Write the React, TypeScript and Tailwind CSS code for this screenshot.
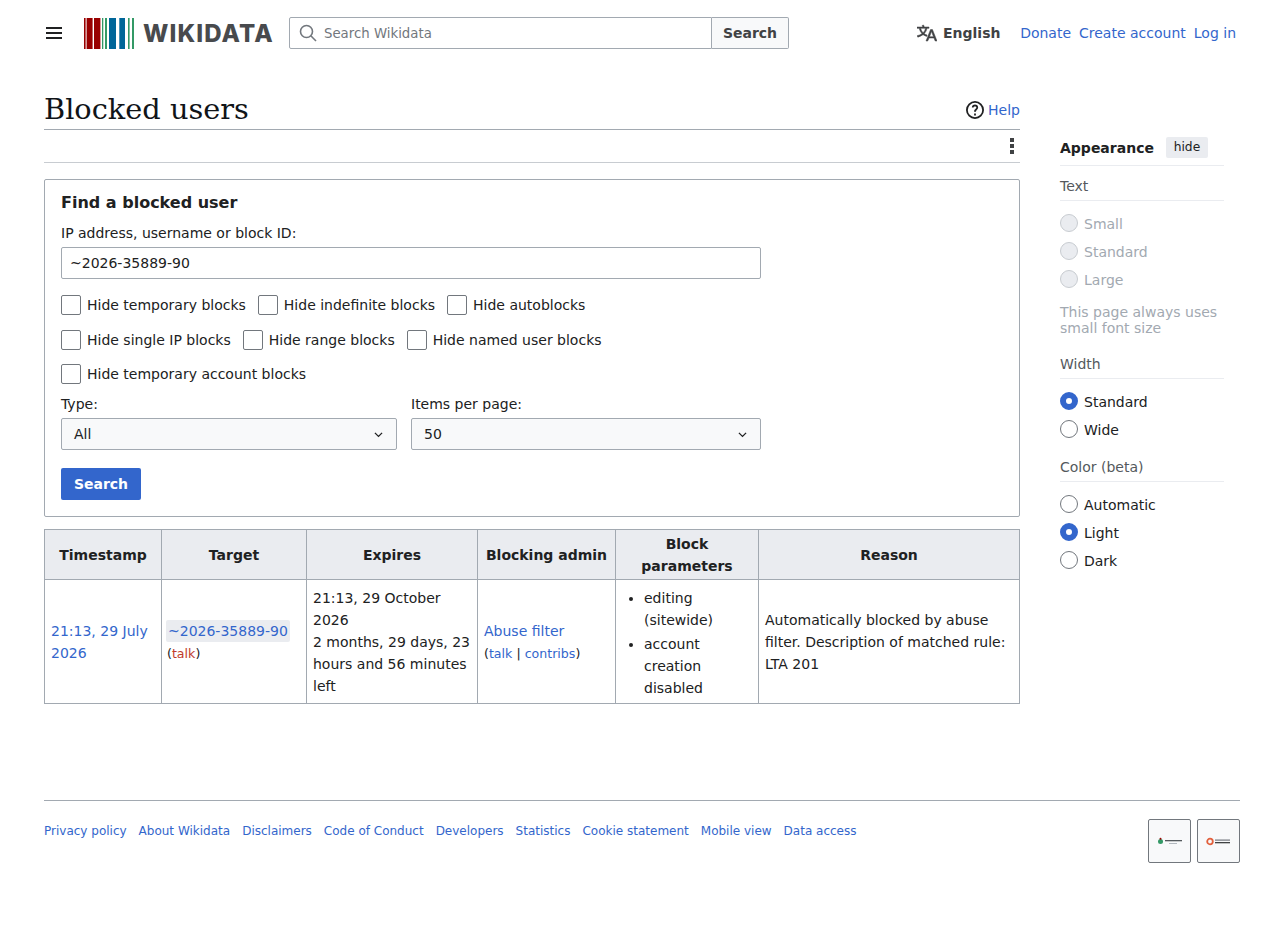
import React from "react";

const SANS = "font-['DejaVu_Sans',sans-serif]";

function Check({ label, className = "" }: { label: string; className?: string }) {
  return (
    <label className={`flex items-center ${className}`}>
      <span className="w-5 h-5 border border-[#72777d] rounded-[2px] bg-white mr-[6px] shrink-0" />
      <span>{label}</span>
    </label>
  );
}

function Radio({ label, state }: { label: string; state: "on" | "off" | "disabled" }) {
  const box =
    state === "on"
      ? "border-[6px] border-[#3366cc] bg-white"
      : state === "off"
      ? "border border-[#72777d] bg-white"
      : "border border-[#c8ccd1] bg-[#eaecf0]";
  return (
    <div className={`flex items-center h-7 ${state === "disabled" ? "text-[#a2a9b1]" : "text-[#202122]"}`}>
      <span className={`w-[18px] h-[18px] rounded-full mr-[6px] mb-[2px] shrink-0 ${box}`} />
      <span>{label}</span>
    </div>
  );
}

function Chevron() {
  return (
    <svg width="11" height="11" viewBox="0 0 20 20" fill="none" stroke="#202122" strokeWidth="2.4">
      <path d="M3.5 7 10 13.5 16.5 7" />
    </svg>
  );
}

function Select({ value, className }: { value: string; className: string }) {
  return (
    <div className={`h-8 border border-[#a2a9b1] rounded-[2px] bg-[#f8f9fa] flex items-center justify-between pl-3 pr-[12px] ${className}`}>
      <span>{value}</span>
      <Chevron />
    </div>
  );
}

function Logo() {
  const bars: [number, number, string][] = [
    [0, 1.6, "#990000"],
    [2.6, 6, "#990000"],
    [10, 6.4, "#990000"],
    [18, 1.3, "#339966"],
    [21, 2, "#339966"],
    [25, 7, "#006699"],
    [35.3, 5.7, "#006699"],
    [44, 1.6, "#339966"],
    [48, 2, "#339966"],
  ];
  return (
    <svg width="50" height="31" viewBox="0 0 50 31" className="shrink-0">
      {bars.map(([x, w, c], i) => (
        <rect key={i} x={x} y="0" width={w} height="31" fill={c} />
      ))}
    </svg>
  );
}

const th = "border border-[#a2a9b1] bg-[#eaecf0] font-bold text-center px-[7px] pt-[3px] pb-[2px] leading-[22px]";
const td = "border border-[#a2a9b1] px-[6px] py-[5px] align-middle leading-[22px]";
const link = "text-[#3366cc]";

export default function App() {
  return (
    <div className={`${SANS} text-[14px] leading-[22px] text-[#202122] bg-white min-h-[951px] w-[1284px]`}>
      {/* header */}
      <header className="h-[66px] pl-[44px] pr-[48px] flex items-center">
        <svg width="20" height="20" viewBox="0 0 20 20" fill="#202122" className="mr-[20px]">
          <path d="M2 4h16v2H2zM2 9h16v2H2zM2 14h16v2H2z" />
        </svg>
        <div className="flex items-center w-[190px] mr-[15px]">
          <Logo />
          <span className="ml-[9px] font-['Inter',sans-serif] font-extrabold text-[24px] leading-[31px] tracking-[1.1px] text-[#484a4d]">WIKIDATA</span>
        </div>
        <div className="w-[500px] h-8 flex">
          <div className="flex-1 h-8 border border-[#a2a9b1] rounded-l-[2px] flex items-center pl-[9px]">
            <svg width="18" height="18" viewBox="0 0 18 18" fill="none" stroke="#72777d" strokeWidth="1.6" className="mr-[7px]">
              <circle cx="7.500" cy="7.500" r="6" />
              <path d="m11.800 11.800 5.200 5.200" />
            </svg>
            <span className="text-[#72777d] text-[13.3px] pt-[1px]">Search Wikidata</span>
          </div>
          <div className="w-[77px] h-8 border border-l-0 border-[#a2a9b1] rounded-r-[2px] bg-[#f8f9fa] flex items-center justify-center font-bold text-[#404244]">
            Search
          </div>
        </div>
        <div className="flex items-center ml-[128px] font-bold text-[#404244]">
          <svg width="20" height="20" viewBox="0 0 20 20" fill="#404244" stroke="#404244" strokeWidth="0.5" className="mr-[6px]">
            <path d="M20 18h-1.44a.6.6 0 0 1-.4-.12.8.8 0 0 1-.23-.31L17 15h-5l-1 2.54a.8.8 0 0 1-.22.3.6.6 0 0 1-.4.14H9l4.55-11.47h1.89zm-3.53-4.31L14.89 9.5a12 12 0 0 1-.39-1.24q-.09.37-.19.69l-.19.56-1.58 4.19zm-6.3-1.58a13.4 13.4 0 0 1-2.91-1.41 11.5 11.5 0 0 0 2.81-5.37H12V4H7.31a4 4 0 0 0-.2-.56C6.87 2.79 6.6 2 6.6 2l-1.47.5s.4.89.6 1.5H0v1.33h2.15A11.2 11.2 0 0 0 5 10.7a17.2 17.2 0 0 1-5 2.1q.56.82.87 1.38a23.3 23.3 0 0 0 5.22-2.51 15.6 15.6 0 0 0 3.56 1.77zM3.63 5.33h4.91a8.1 8.1 0 0 1-2.45 4.45 9.1 9.1 0 0 1-2.46-4.45" />
          </svg>
          English
        </div>
        <div className={`ml-auto flex gap-2 ${link}`}>
          <span>Donate</span>
          <span>Create account</span>
          <span>Log in</span>
        </div>
      </header>

      {/* body */}
      <div className="flex pl-[44px]">
        <main className="w-[976px] shrink-0">
          <div className="h-[64px] border-b border-[#a2a9b1] flex items-end justify-between pb-[2px]">
            <h1 className="font-['DejaVu_Serif',serif] text-[28.8px] leading-[36px] text-[#101418]">Blocked users</h1>
            <div className="flex items-center mb-[6px]">
              <svg width="18" height="18" viewBox="0 0 20 20" fill="#202122" className="mr-[4px]">
                <path d="M10 0a10 10 0 1 0 0 20 10 10 0 0 0 0-20m0 18a8 8 0 1 1 0-16 8 8 0 0 1 0 16" />
                <path d="M9 14h2v2H9zM10 4C7.900 4 6.500 5.300 6.500 7.200h2C8.500 6.400 9.100 6 10 6c.9 0 1.500.5 1.500 1.300 0 1.500-2.500 1.800-2.500 4.700h2c0-2 2.500-2.500 2.500-4.800C13.500 5.300 12.100 4 10 4" />
              </svg>
              <span className={link}>Help</span>
            </div>
          </div>
          <div className="h-[33px] border-b border-[#c8ccd1] flex items-center justify-end">
            <svg width="20" height="20" viewBox="0 0 20 20" fill="#404244" className="mr-[-2px]">
              <rect x="8" y="2" width="4" height="4" />
              <rect x="8" y="8" width="4" height="4" />
              <rect x="8" y="14" width="4" height="4" />
            </svg>
          </div>

          <section className="mt-4 h-[338px] border border-[#a2a9b1] rounded-[2px] px-4 pt-[12px]">
            <h2 className="font-bold text-[16px] leading-[22px] text-[#202122]">Find a blocked user</h2>
            <div className="mt-[8px]">IP address, username or block ID:</div>
            <div className="mt-[3px] w-[700px] h-8 border border-[#a2a9b1] rounded-[2px] flex items-center pl-2">~2026-35889-90</div>
            <div className="flex h-[22px] items-center mt-[15px]">
              <Check label="Hide temporary blocks" className="mr-3" />
              <Check label="Hide indefinite blocks" className="mr-3" />
              <Check label="Hide autoblocks" />
            </div>
            <div className="flex h-[22px] items-center mt-[13px]">
              <Check label="Hide single IP blocks" className="mr-3" />
              <Check label="Hide range blocks" className="mr-3" />
              <Check label="Hide named user blocks" />
            </div>
            <div className="flex h-[22px] items-center mt-[12px]">
              <Check label="Hide temporary account blocks" />
            </div>
            <div className="flex gap-[14px] mt-[8px]">
              <div>
                <div className="mb-[3px]">Type:</div>
                <Select value="All" className="w-[336px]" />
              </div>
              <div>
                <div className="mb-[3px]">Items per page:</div>
                <Select value="50" className="w-[350px]" />
              </div>
            </div>
            <div className="mt-[18px] w-20 h-8 bg-[#3366cc] rounded-[2px] text-white font-bold flex items-center justify-center">Search</div>
          </section>

          <table className="mt-3 w-[976px] table-fixed border-collapse">
            <colgroup>
              <col className="w-[117px]" />
              <col className="w-[145px]" />
              <col className="w-[171px]" />
              <col className="w-[138px]" />
              <col className="w-[143px]" />
              <col />
            </colgroup>
            <thead>
              <tr>
                <th className={th}>Timestamp</th>
                <th className={th}>Target</th>
                <th className={th}>Expires</th>
                <th className={th}>Blocking admin</th>
                <th className={th}>Block parameters</th>
                <th className={th}>Reason</th>
              </tr>
            </thead>
            <tbody>
              <tr>
                <td className={`${td} ${link}`}>21:13, 29 July 2026</td>
                <td className={td}>
                  <span className={`${link} bg-[#eaecf0] rounded-[2px] px-[2px] py-[2px] ml-[-2px] inline-block leading-[18px]`}>~2026-35889-90</span>
                  <div className="text-[12.6px] leading-[22px] mt-[1px] mb-[-2px] ml-[-1px]">(<span className="text-[#bf3c2c]">talk</span>)</div>
                </td>
                <td className={td}>
                  21:13, 29 October 2026
                  <br />
                  2 months, 29 days, 23 hours and 56 minutes left
                </td>
                <td className={td}>
                  <div className={link}>Abuse filter</div>
                  <div className="text-[12.6px] mt-[1px] mb-[-1px]">
                    (<span className={link}>talk</span> | <span className={link}>contribs</span>)
                  </div>
                </td>
                <td className="border border-[#a2a9b1] px-[6px] pt-[7px] pb-[4px] align-middle leading-[22px]">
                  <ul className="list-disc pl-[22px]">
                    <li>editing (sitewide)</li>
                    <li className="mt-[2px]">account creation disabled</li>
                  </ul>
                </td>
                <td className={td}>Automatically blocked by abuse filter. Description of matched rule: LTA 201</td>
              </tr>
            </tbody>
          </table>
        </main>

        <aside className="w-[164px] ml-[40px] mt-[71px] shrink-0">
          <div className="border-b border-[#eaecf0] flex items-center pb-[7px] box-content h-[21px] leading-none">
            <span className="font-bold">Appearance</span>
            <span className="ml-3 w-[42px] h-[21px] bg-[#eaecf0] rounded-[2px] flex items-center justify-center text-[12.25px] text-[#202122]">hide</span>
          </div>
          <div className="text-[#54595d] mt-[9px] h-[26px] border-b border-[#eaecf0]">Text</div>
          <div className="mt-[9px]">
            <Radio label="Small" state="disabled" />
            <Radio label="Standard" state="disabled" />
            <Radio label="Large" state="disabled" />
          </div>
          <div className="text-[#a2a9b1] leading-4 mt-[10px]">
            This page always uses small font size
          </div>
          <div className="text-[#54595d] mt-[16px] h-[27px] border-b border-[#eaecf0] leading-[22px] pt-[1px]">Width</div>
          <div className="mt-[9px]">
            <Radio label="Standard" state="on" />
            <Radio label="Wide" state="off" />
          </div>
          <div className="text-[#54595d] mt-[12px] h-[26px] border-b border-[#eaecf0]">Color (beta)</div>
          <div className="mt-[9px]">
            <Radio label="Automatic" state="off" />
            <Radio label="Light" state="on" />
            <Radio label="Dark" state="off" />
          </div>
        </aside>
      </div>

      {/* footer */}
      <footer className="mx-[44px] w-[1196px]">
        <div className="mt-[96px] border-t border-[#a2a9b1] pt-[18px] flex justify-between text-[12px] leading-[20px]">
          <div className={`flex gap-3 mt-[2px] ${link}`}>
            <span>Privacy policy</span>
            <span>About Wikidata</span>
            <span>Disclaimers</span>
            <span>Code of Conduct</span>
            <span>Developers</span>
            <span>Statistics</span>
            <span>Cookie statement</span>
            <span>Mobile view</span>
            <span>Data access</span>
          </div>
          <div className="flex gap-[6px]">
            <div className="w-[43px] h-[44px] border border-[#72777d] rounded-[2px] bg-[#f8f9fa] flex items-center justify-center">
              <svg width="26" height="9" viewBox="0 0 26 9">
                <circle cx="3.500" cy="4.500" r="2.500" fill="#339966" />
                <circle cx="3.500" cy="1.800" r="1" fill="#990000" />
                <rect x="8" y="3" width="17" height="1.300" fill="#54595d" />
                <rect x="12" y="6" width="8" height="0.800" fill="#a2a9b1" />
              </svg>
            </div>
            <div className="w-[43px] h-[44px] border border-[#72777d] rounded-[2px] bg-[#f8f9fa] flex items-center justify-center">
              <svg width="26" height="9" viewBox="0 0 26 9">
                <circle cx="4" cy="4.500" r="2.800" fill="none" stroke="#e2603c" strokeWidth="1.800" />
                <rect x="9" y="2.500" width="15" height="1.200" fill="#72777d" />
                <rect x="9" y="5" width="15" height="1.300" fill="#404244" />
              </svg>
            </div>
          </div>
        </div>
      </footer>
    </div>
  );
}
